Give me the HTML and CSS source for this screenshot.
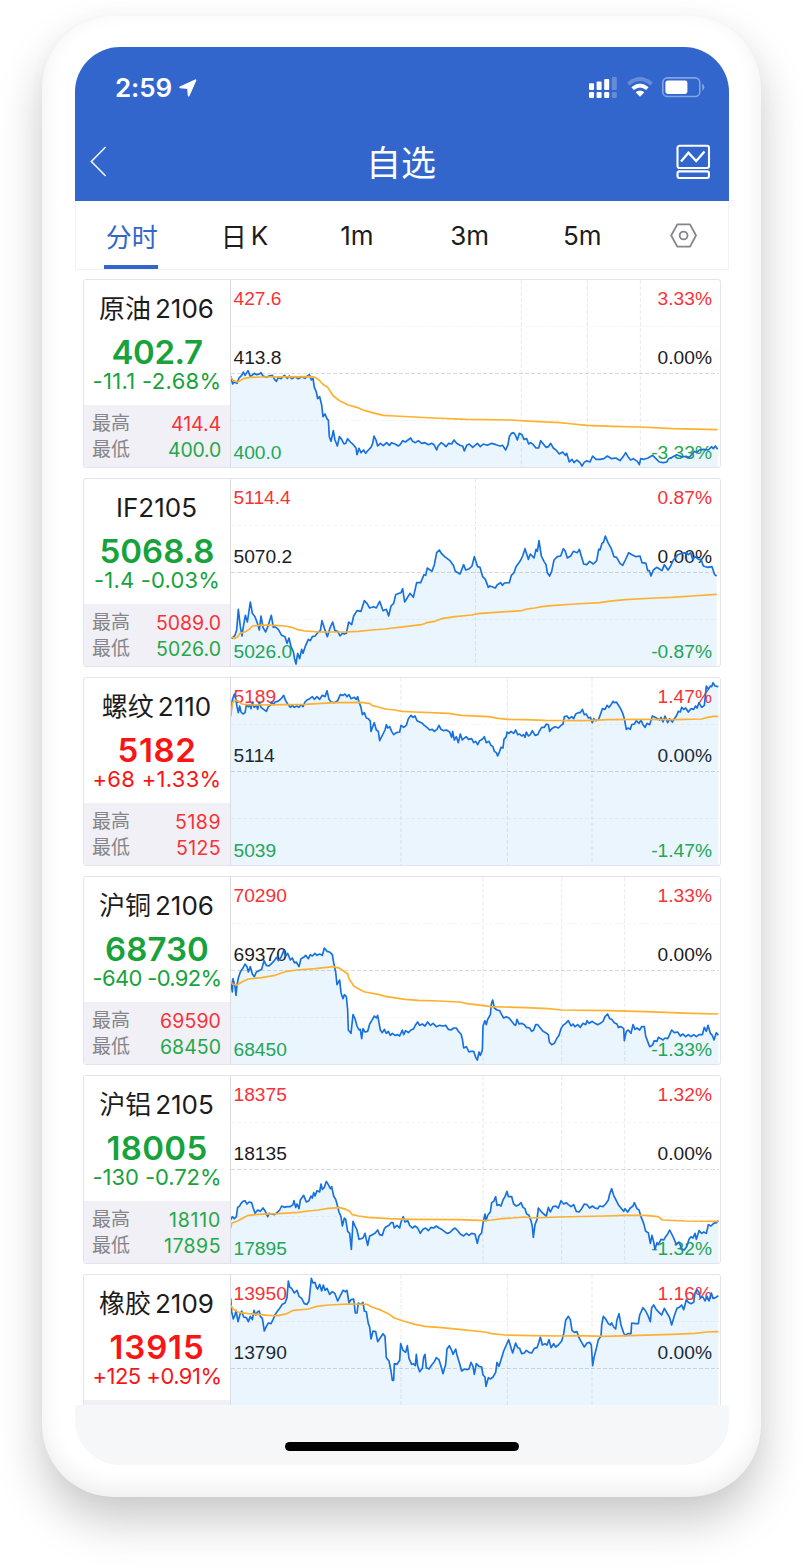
FILE: index.html
```html
<!DOCTYPE html>
<html lang="zh-CN">
<head>
<meta charset="utf-8">
<title>自选</title>
<link rel="stylesheet" href="styles.css">
</head>
<body>
<div class="phone">
  <div class="screen">
    <header class="header">
      <div class="status">
        <span class="time">2:59</span>
        <svg class="locate" viewBox="0 0 18 18"><path d="M1.2 8.3 16.5 1.2 9.7 16.6 9 9Z" fill="#fff" stroke="#fff" stroke-width="1.8" stroke-linejoin="round"/></svg>
        <svg class="signals" viewBox="0 0 118 22">
          <g fill="#fff">
            <rect x="0" y="6.3" width="5" height="6.7" rx="1"/><rect x="7.6" y="4.6" width="5" height="8.4" rx="1"/><rect x="15.2" y="2" width="5" height="11" rx="1"/>
            <rect x="0" y="15" width="5" height="6" rx="1.2"/><rect x="7.6" y="15" width="5" height="6" rx="1.2"/><rect x="15.2" y="15" width="5" height="6" rx="1.2"/>
            <g opacity=".25"><rect x="22.8" y="0" width="5" height="13" rx="1"/><rect x="22.8" y="15" width="5" height="6" rx="1.2"/></g>
            <path d="M46.6 15.2Q51 12 55.4 15.2L51 19.8Z"/>
          </g>
          <path d="M43.6 11.6Q51 5.3 58.4 11.6" fill="none" stroke="#fff" stroke-width="3.8"/>
          <path d="M39.4 7Q51-3 62.6 7" fill="none" stroke="#fff" stroke-opacity=".25" stroke-width="3.8"/>
          <rect x="73.8" y=".9" width="37" height="18.6" rx="4.6" fill="none" stroke="#fff" stroke-opacity=".4" stroke-width="1.6"/>
          <rect x="76.4" y="3.5" width="22" height="13.4" rx="2.4" fill="#fff"/>
          <path d="M113.2 6.6q2.2 1.1 2.2 3.6t-2.2 3.6z" fill="#fff" fill-opacity=".4"/>
        </svg>
      </div>
      <div class="navbar">
        <svg class="back" viewBox="0 0 17 31"><path d="M15.6 1 1.4 15.5 15.6 30" fill="none" stroke="#fff" stroke-opacity=".9" stroke-width="1.7"/></svg>
        <h1 class="title">自选</h1>
        <svg class="board" viewBox="0 0 35 36"><g fill="none" stroke="#fff" stroke-width="2.1"><rect x="1.5" y="1.8" width="31.5" height="22.2" rx="2"/><rect x="1.5" y="27.4" width="31.5" height="6.6" rx="2"/><path d="M5 17.5 12.4 8.8 20.2 17 28.5 7.6" stroke-width="2.3"/></g></svg>
      </div>
    </header>
    <nav class="tabs">
      <span class="tab active">分时</span>
      <span class="tab">日<span class="gap"></span>K</span>
      <span class="tab">1m</span>
      <span class="tab">3m</span>
      <span class="tab">5m</span>
      <svg class="gear" viewBox="0 0 27 25"><g fill="none" stroke="#85858a" stroke-width="1.8"><path d="M7.3 1.4H20L26 12.5 20 23.6H7.3L1.2 12.5Z" stroke-linejoin="round"/><circle cx="13.6" cy="12.5" r="3.9"/></g></svg>
    </nav>
    <main class="list" id="list"></main>
    <footer class="bottom"><div class="home"></div></footer>
  </div>
</div>
<script src="app.js"></script>
</body>
</html>
```
FILE: styles.css
```css
* { box-sizing: border-box; }
body {
  margin: 0;
  width: 804px;
  height: 1568px;
  overflow: hidden;
  background: #fff;
  font-family: Inter, "Noto Sans CJK SC", sans-serif;
  color: #1c1c1e;
}
.phone {
  width: 719px;
  height: 1481px;
  margin: 16px 0 0 42px;
  padding: 31px 32px 32px 33px;
  border-radius: 72px;
  background: #fff;
  box-shadow: 0 24px 46px rgba(0, 0, 0, .21), 0 0 22px rgba(0, 0, 0, .02), inset 0 -8px 22px rgba(0, 0, 0, .07);
}
.screen {
  width: 654px;
  height: 1418px;
  display: flex;
  flex-direction: column;
  border-radius: 45px;
  overflow: hidden;
  background: #fff;
}
.header { height: 154px; background: #3266cd; color: #fff; flex: none; }
.status { height: 81px; padding: 0 24px 0 40px; display: flex; align-items: center; }
.time { font-size: 26px; font-weight: 600; line-height: 30px; width: 57px; white-space: nowrap; letter-spacing: -.1px; }
.locate { width: 18px; height: 18px; margin-left: 7px; flex: none; }
.signals { width: 118px; height: 22px; margin-left: auto; margin-right: -2px; }
.navbar { height: 73px; padding: 0 18px 4px 15px; display: flex; align-items: center; justify-content: space-between; }
.back { width: 17px; height: 31px; margin-top: -2px; }
.title { margin: 0 0 0 19px; font-size: 35px; line-height: 40px; font-weight: 400; }
.board { width: 35px; height: 36px; margin-top: -1px; }
.tabs {
  height: 69px;
  flex: none;
  display: flex;
  align-items: stretch;
  border: 1px solid #f2f2f5;
  border-top: 0;
  font-size: 26px;
}
.tab { width: 112.6px; padding: 1px 1px 0 0; display: flex; justify-content: center; align-items: center; position: relative; }
.tab .gap { width: 4px; }
.active { color: #3266cd; padding-top: 0; }
.active::after { content: ""; position: absolute; left: 28px; bottom: 0; width: 54px; height: 4px; background: #3266cd; }
.gear { width: 27px; height: 25px; margin: 22px auto 0; }
.list {
  height: 1135px;
  flex: none;
  padding: 9px 8px 0;
  overflow: hidden;
  display: flex;
  flex-direction: column;
  gap: 10px;
}
.card {
  height: 189px;
  flex: none;
  display: flex;
  border: 1px solid #e3e4e9;
  border-radius: 3px;
  overflow: hidden;
}
.quote { width: 147px; flex: none; border-right: 1px solid #dcdde2; display: flex; flex-direction: column; text-align: center; white-space: nowrap; }
.name { height: 36px; margin-top: 11px; padding-right: 1px; line-height: 36px; font-size: 26px; display: flex; justify-content: center; gap: 4px; }
.price { height: 36px; margin-top: 7px; line-height: 36px; font-size: 33px; font-weight: 600; }
.change { height: 24px; margin-top: -1px; line-height: 24px; font-size: 22px; }
.range { height: 62px; margin-top: auto; padding: 6px 9px 0 8px; background: #f0f0f6; }
.row { height: 26px; display: flex; justify-content: space-between; align-items: center; font-size: 19px; line-height: 26px; color: #85858a; }
.row b { font-weight: 400; font-size: 19.5px; }
.up { color: #fa1414; }
.down { color: #17a23c; }
.row .up, .scale .up { color: #f83236; }
.row .down, .scale .down { color: #25a848; }
.chart { width: 488px; flex: none; height: 187px; position: relative; overflow: hidden; }
.scale {
  height: 187px;
  padding: 8px 7px 0 2.5px;
  font-family: "Liberation Sans", Arial, sans-serif;
  font-size: 19.2px;
  line-height: 22px;
}
.scale div { display: flex; justify-content: space-between; }
.scale div + div { margin-top: 37px; }
.scale div + div + div { margin-top: 73px; }
.plot { position: absolute; left: 0; top: 0; width: 489px; height: 187px; display: block; }
.grid { stroke: #000; stroke-opacity: .085; stroke-width: 3; stroke-dasharray: 12 6; fill: none; }
.grid .faint { stroke-opacity: .045; }
.grid .mid { stroke-opacity: .15; }
.area { fill: #1e96f0; fill-opacity: .095; }
.line { fill: none; stroke: #1670de; stroke-width: 5; stroke-linejoin: round; }
.avg { fill: none; stroke: #ffb02e; stroke-width: 5; stroke-linejoin: round; }
.bottom { flex: 1; background: #f6f7f9; display: flex; justify-content: center; padding-top: 37px; }
.home { width: 234px; height: 9px; border-radius: 5px; background: #000; }
```
FILE: app.js
```js
// Each plot uses three units per pixel; y0 is the top edge of its viewBox.
// Quote figures are [text, width in px]; spacing is adjusted to fill the width.
const quotes = [
  { name: ['原油', '2106'], dir: 'down', price: ['402.7', 91], change: ['-11.1 -2.68%', 129], hi: ['up', '414.4', 50], lo: ['down', '400.0', 53],
    scale: [['427.6', '3.33%'], ['413.8', '0.00%'], ['400.0', '-3.33%']], y0: 30, v: [889, 1087, 1246],
    line: '17,318 23,342 27,336 36,340 42,324 50,316 55,306 60,316 69,302 76,320 88,310 95,314 103,312 108,308 114,318 125,322 132,318 142,316 150,330 154,334 160,322 168,326 178,316 187,325 193,318 200,326 210,320 220,326 230,320 240,325 247,318 253,314 259,330 264,325 268,352 274,366 278,386 284,380 290,405 294,440 300,432 307,448 310,450 313,500 318,514 325,482 330,510 337,528 343,500 350,508 357,522 362,520 368,506 376,516 385,524 393,534 396,554 402,535 408,548 416,540 422,550 430,540 438,532 443,520 447,498 453,510 458,528 466,520 475,527 485,518 493,526 500,518 510,522 520,528 525,524 533,512 541,516 549,510 557,504 563,514 571,518 580,512 590,520 600,518 610,524 620,520 627,524 635,540 639,528 649,518 657,524 663,530 671,520 680,522 687,510 695,520 705,526 713,528 718,543 725,526 733,522 743,532 757,520 766,530 775,522 787,526 800,520 813,524 825,528 833,526 842,540 849,524 853,500 859,490 866,488 871,495 877,510 883,490 891,494 897,508 905,506 911,522 917,518 925,524 933,534 941,534 947,512 955,522 963,532 970,530 977,520 985,534 995,542 1003,552 1013,546 1021,556 1025,550 1033,576 1041,568 1047,578 1055,570 1065,578 1071,588 1077,578 1085,572 1095,576 1103,558 1113,568 1125,568 1137,566 1147,558 1160,566 1173,564 1185,572 1193,562 1202,548 1209,560 1217,570 1225,566 1237,574 1243,584 1247,566 1257,568 1269,564 1283,556 1293,566 1303,576 1315,578 1325,576 1331,566 1341,562 1355,554 1370,560 1385,560 1393,562 1401,552 1409,544 1415,548 1423,540 1435,538 1450,540 1460,530 1465,536 1471,528 1478,538',
    avg: '17,320 25,332 38,336 55,326 75,322 110,321 260,320 270,322 282,330 295,344 308,352 325,378 345,393 370,405 395,412 420,422 450,430 475,436 510,438 625,444 725,448 855,450 925,454 1005,458 1045,462 1085,466 1165,469 1245,471 1345,476 1478,479' },
  { name: ['IF2105'], dir: 'down', price: ['5068.8', 115], change: ['-1.4 -0.03%', 126], hi: ['up', '5089.0', 65], lo: ['down', '5026.0', 65],
    scale: [['5114.4', '0.87%'], ['5070.2', '0.00%'], ['5026.0', '-0.87%']], y0: 27, v: [751.5],
    line: '20,506 30,496 35,480 40,418 46,470 51,498 55,470 61,436 67,456 76,396 82,430 90,440 98,462 103,480 108,438 114,472 122,486 129,468 139,436 145,472 150,470 160,478 170,496 180,500 186,520 192,504 198,530 205,545 209,568 213,582 218,550 224,566 230,538 234,550 242,526 250,508 256,512 262,500 270,498 280,486 286,482 291,452 298,474 307,500 315,474 323,456 330,482 338,484 345,498 352,490 358,492 364,490 371,456 380,464 386,438 396,422 408,424 418,392 426,400 434,414 446,410 454,414 464,394 474,422 484,418 491,438 498,408 506,400 512,374 522,370 528,368 533,356 539,396 555,370 565,382 575,338 587,338 597,314 602,316 607,294 621,304 628,284 635,248 643,240 649,250 659,260 675,272 685,286 691,304 705,312 716,284 722,300 733,296 741,288 748,260 758,290 765,292 773,320 781,328 790,352 795,348 811,354 817,344 827,338 832,346 838,339 853,338 859,316 867,308 873,290 885,274 893,258 900,236 910,268 916,252 927,264 933,238 937,244 942,212 949,258 957,274 963,284 967,308 974,318 980,304 987,270 997,260 1007,258 1015,236 1021,244 1027,264 1037,258 1045,244 1057,248 1063,238 1070,262 1076,282 1085,284 1094,274 1105,282 1115,272 1121,238 1125,240 1131,220 1136,216 1141,198 1149,218 1159,236 1167,260 1175,262 1185,280 1193,286 1201,270 1211,248 1221,254 1233,260 1245,258 1251,278 1263,280 1268,302 1273,302 1278,318 1285,300 1295,292 1305,298 1311,302 1318,284 1329,300 1337,288 1345,270 1359,254 1370,250 1383,248 1390,254 1397,248 1403,268 1410,260 1421,268 1428,268 1435,288 1447,292 1461,290 1469,314 1475,318',
    avg: '20,500 28,506 38,500 45,490 60,486 72,478 82,468 100,466 115,465 150,466 180,468 200,472 215,478 240,483 280,486 360,486 400,484 440,480 480,477 540,470 590,464 605,458 630,454 650,446 690,440 740,435 760,431 800,428 860,424 890,422 905,417 930,414 950,410 980,407 1050,402 1125,398 1150,394 1200,389 1290,384 1340,382 1400,378 1475,373' },
  { name: ['螺纹', '2110'], dir: 'up', price: ['5182', 79], change: ['+68 +1.33%', 129], hi: ['up', '5189', 46], lo: ['up', '5125', 45],
    scale: [['5189', '1.47%'], ['5114', '0.00%'], ['5039', '-1.47%']], y0: 24, v: [528, 847, 1101],
    line: '17,135 22,90 28,72 33,88 36,110 40,128 44,108 48,126 54,132 60,128 64,106 70,110 74,104 78,116 82,98 88,112 94,106 98,118 103,96 108,112 116,118 124,124 130,110 136,106 140,96 146,104 150,96 158,94 164,90 170,84 176,76 182,92 188,102 196,112 202,106 208,112 216,108 222,112 228,104 234,110 240,96 246,90 254,86 262,80 268,88 276,80 284,88 292,76 300,80 306,62 312,88 318,96 328,98 338,92 346,74 354,76 360,72 366,80 372,74 378,86 388,82 394,88 398,80 402,96 408,112 412,134 418,128 424,144 430,146 436,154 438,184 444,168 448,158 454,180 460,184 464,212 470,200 474,192 480,180 484,164 488,174 494,170 500,184 506,194 514,188 524,186 528,166 536,172 544,166 550,146 558,136 564,142 570,138 576,152 584,156 592,160 598,166 606,172 614,180 622,178 628,184 636,178 642,166 648,178 656,182 664,180 674,186 680,202 683,184 688,210 694,200 700,218 706,192 712,210 718,204 724,200 730,208 740,206 746,218 752,214 758,224 764,212 772,208 778,200 784,218 792,214 798,226 804,230 808,244 814,248 818,258 824,244 828,232 834,234 837,208 844,200 846,186 852,190 858,184 866,190 872,180 878,194 884,192 890,198 896,194 900,202 904,186 910,198 916,194 922,182 930,196 938,194 944,182 950,172 958,172 964,162 970,164 974,184 980,176 990,170 1000,174 1008,166 1014,162 1018,140 1026,138 1032,146 1040,140 1046,146 1052,132 1060,128 1066,128 1072,118 1078,134 1084,132 1090,144 1096,142 1102,158 1106,146 1112,152 1120,150 1126,134 1132,116 1140,118 1146,106 1152,112 1158,104 1164,94 1168,98 1174,96 1182,108 1188,118 1194,132 1198,146 1204,178 1210,174 1216,178 1220,164 1228,162 1234,152 1242,160 1248,150 1254,164 1260,172 1266,160 1274,164 1282,138 1290,142 1298,146 1304,150 1308,142 1314,156 1320,138 1328,158 1334,146 1342,156 1348,146 1354,138 1360,124 1366,126 1370,112 1376,118 1382,114 1390,126 1398,116 1406,118 1412,108 1416,114 1422,98 1430,112 1438,106 1444,48 1450,58 1456,48 1460,50 1464,38 1470,48 1480,50',
    avg: '17,140 22,100 28,91 38,92 50,102 80,105 180,104 240,103 290,100 330,98 410,97 435,101 442,107 460,111 480,117 510,120 530,124 570,126 670,130 710,136 790,140 820,145 850,148 900,149 960,151 1080,152 1150,149 1250,148 1350,149 1430,147 1448,142 1465,139 1480,139' },
  { name: ['沪铜', '2106'], dir: 'down', price: ['68730', 104], change: ['-640 -0.92%', 129], hi: ['up', '69590', 61], lo: ['down', '68450', 61],
    scale: [['70290', '1.33%'], ['69370', '0.00%'], ['68450', '-1.33%']], y0: 21, v: [774, 1010, 1199],
    line: '17,332 22,366 24,326 30,350 33,376 36,345 40,324 46,306 54,294 60,282 66,290 70,306 76,290 82,312 88,320 94,306 102,302 110,298 117,272 124,286 132,288 140,280 148,272 154,262 160,272 168,262 176,242 182,258 188,250 196,270 202,264 208,278 214,276 222,290 228,266 236,262 242,256 250,266 256,254 262,258 270,250 276,256 284,252 292,256 298,234 306,244 314,246 322,254 326,278 332,306 336,344 344,330 348,368 354,386 358,374 364,380 368,420 370,480 378,490 384,434 390,446 396,468 402,480 406,478 410,506 414,476 420,486 428,484 434,462 440,452 448,438 454,444 458,436 462,458 466,480 472,488 478,478 484,490 490,484 496,496 502,490 510,496 518,494 524,498 532,480 536,494 542,482 550,488 558,480 566,476 572,464 578,456 584,466 592,462 600,468 608,456 616,466 624,460 634,470 644,466 654,468 662,466 670,478 678,480 686,474 694,474 700,484 708,492 712,506 716,534 724,530 732,546 738,544 746,544 752,562 757,570 762,546 766,556 772,540 774,468 780,452 784,464 788,448 796,434 799,402 803,390 808,414 816,420 824,422 830,434 836,444 844,440 852,444 860,454 868,464 872,466 876,448 882,462 890,460 898,464 904,472 914,474 920,484 926,480 932,464 938,464 946,474 954,484 962,488 970,494 973,516 980,524 988,520 996,504 1002,496 1008,476 1014,466 1022,460 1030,452 1038,468 1044,462 1050,470 1058,464 1066,472 1074,460 1082,464 1086,452 1092,460 1102,454 1110,460 1118,464 1126,460 1134,454 1140,440 1148,432 1154,446 1160,448 1168,458 1176,462 1180,472 1188,470 1196,476 1198,512 1204,484 1210,480 1218,490 1224,464 1230,478 1236,474 1244,480 1250,470 1258,470 1262,498 1268,514 1274,530 1282,526 1288,512 1296,514 1300,502 1308,506 1314,510 1320,504 1328,506 1334,494 1340,480 1348,488 1358,486 1366,498 1374,492 1382,500 1390,494 1398,500 1406,494 1414,500 1422,494 1432,494 1438,472 1444,484 1449,466 1456,490 1462,496 1467,510 1474,488 1480,496',
    avg: '18,334 22,342 36,345 50,336 70,327 110,323 150,316 180,305 215,300 270,296 325,290 345,295 360,306 368,312 372,326 380,338 386,348 400,356 420,366 460,373 480,379 540,388 580,391 640,393 705,396 725,401 770,406 800,410 900,413 970,416 1010,420 1150,422 1260,425 1400,430 1480,432' },
  { name: ['沪铝', '2105'], dir: 'down', price: ['18005', 101], change: ['-130 -0.72%', 129], hi: ['down', '18110', 52], lo: ['down', '17895', 57],
    scale: [['18375', '1.32%'], ['18135', '0.00%'], ['17895', '-1.32%']], y0: 18, v: [774, 1010, 1199],
    line: '17,450 22,440 28,446 34,440 38,412 44,408 48,400 54,394 60,392 66,402 72,396 80,398 84,412 90,430 98,420 106,424 114,414 120,422 128,440 132,430 140,432 148,434 156,428 164,420 170,408 178,412 186,410 196,410 204,404 207,392 212,412 216,402 222,416 226,390 236,376 244,396 252,392 258,378 262,384 266,368 270,378 276,362 284,366 288,342 292,358 298,352 304,334 310,344 316,356 320,350 326,378 332,388 336,402 342,426 348,440 352,468 358,444 362,448 368,484 374,490 379,538 384,454 390,468 396,480 402,508 408,506 414,504 420,490 424,508 428,526 434,498 442,494 450,490 458,480 464,494 472,496 478,476 484,470 492,466 498,458 504,458 508,474 516,466 524,474 528,456 535,440 540,456 548,452 554,466 562,474 570,468 578,474 586,490 594,478 602,474 610,482 618,472 626,474 634,468 642,474 650,478 658,484 666,490 674,488 682,480 690,474 698,482 706,492 716,498 724,490 732,496 740,490 750,492 757,520 762,498 770,488 774,460 780,432 783,452 788,436 796,426 800,398 806,394 812,380 816,406 822,404 828,408 834,390 840,380 846,364 850,380 860,380 866,402 874,408 882,404 888,398 894,412 900,416 905,432 912,436 918,452 922,470 925,502 930,464 936,448 940,414 948,424 956,432 964,438 970,412 976,426 984,410 992,408 1000,414 1008,392 1016,402 1024,398 1030,404 1038,410 1046,404 1054,424 1062,426 1070,416 1078,402 1086,404 1094,414 1102,408 1110,414 1118,416 1124,408 1134,410 1142,402 1150,390 1154,372 1160,356 1166,376 1174,392 1180,404 1188,414 1196,424 1200,416 1208,426 1216,414 1224,408 1228,398 1236,416 1242,420 1248,440 1256,460 1262,484 1270,488 1276,520 1281,496 1286,516 1290,538 1296,518 1300,524 1308,508 1316,510 1322,500 1328,492 1334,480 1340,492 1346,504 1354,524 1362,516 1370,536 1378,540 1386,528 1392,508 1398,500 1404,504 1410,490 1414,508 1422,482 1430,490 1436,486 1444,490 1450,464 1458,468 1466,460 1474,458 1480,452',
    avg: '17,475 20,460 36,454 50,446 70,436 100,433 160,431 220,427 250,423 280,420 310,415 345,413 362,418 374,424 382,434 400,438 430,442 490,446 560,448 700,449 780,452 800,450 830,446 900,441 920,444 1000,441 1140,438 1200,436 1260,436 1300,440 1312,450 1380,453 1480,454' },
  { name: ['橡胶', '2109'], dir: 'up', price: ['13915', 95], change: ['+125 +0.91%', 129], hi: null, lo: null,
    scale: [['13950', '1.16%'], ['13790', '0.00%']], y0: 30, v: [528, 847, 1101],
    line: '17,100 20,140 25,162 30,150 33,136 39,170 45,148 50,138 56,156 64,158 70,170 76,154 82,164 87,136 92,150 98,140 103,138 106,154 112,160 118,198 124,184 130,174 138,176 144,164 150,150 156,140 164,130 172,118 180,114 186,98 190,48 194,66 200,70 208,84 216,76 222,94 230,100 238,116 246,118 252,108 256,70 259,40 264,54 270,52 274,66 278,72 284,58 290,78 295,60 300,76 306,70 314,88 322,80 330,86 338,108 346,92 354,76 362,80 366,76 372,114 378,104 386,102 391,144 396,144 400,114 408,118 414,112 418,138 424,140 430,176 434,186 438,222 444,198 452,200 458,230 466,218 474,206 480,214 484,278 492,288 498,318 502,346 506,346 508,296 516,298 524,286 527,236 534,256 542,262 547,242 552,280 560,298 566,296 571,302 574,268 578,302 584,320 592,310 596,276 600,268 604,308 612,312 620,300 628,290 634,278 642,284 648,304 654,326 662,298 666,252 673,242 680,256 684,268 692,252 696,270 704,296 710,318 718,312 726,314 732,312 738,292 744,304 748,328 754,296 762,304 770,306 774,330 780,336 783,364 790,338 796,342 804,336 812,322 816,292 822,304 830,278 836,258 844,240 851,224 858,248 863,264 872,234 878,248 884,250 890,266 898,264 904,256 912,262 920,264 928,250 936,248 942,230 946,216 952,240 960,236 966,240 972,224 978,248 986,236 992,246 1000,240 1010,228 1016,206 1022,166 1030,154 1036,164 1041,196 1048,202 1056,200 1062,218 1070,232 1078,246 1086,234 1094,232 1099,240 1103,302 1107,278 1114,250 1120,224 1128,214 1130,180 1135,154 1142,162 1150,176 1156,180 1160,174 1166,186 1172,192 1176,164 1182,146 1188,180 1196,204 1200,212 1208,206 1218,206 1220,174 1232,176 1240,176 1244,150 1254,128 1262,138 1270,154 1276,170 1280,128 1286,120 1294,134 1302,142 1310,150 1318,130 1326,144 1334,158 1340,180 1348,152 1356,130 1364,126 1370,120 1376,134 1384,104 1390,112 1398,116 1406,112 1410,84 1416,74 1422,82 1426,98 1434,96 1440,108 1446,94 1452,108 1459,84 1464,100 1472,98 1480,92',
    avg: '17,120 24,132 40,142 70,146 100,148 130,151 160,152 185,146 205,136 250,132 275,124 310,120 370,117 425,118 440,126 465,134 490,146 508,159 535,168 570,178 600,184 650,188 710,194 780,201 800,206 840,210 920,212 1010,213 1060,212 1140,214 1240,211 1340,208 1410,205 1445,201 1480,200' }
];

const tone = ['up', '', 'down'];

function rangeRow(label, value) {
  return value ? `<div class="row"><span>${label}</span><b class="${value[0]}" data-fit="${value[2]}">${value[1]}</b></div>` : '';
}

function plot(q) {
  const bottom = q.y0 + 561;
  const first = q.line.split(',')[0];
  const last = q.line.slice(q.line.lastIndexOf(' ') + 1).split(',')[0];
  const h = (dy, cls) => `<path class="${cls}" d="M18 ${q.y0 + dy}H1485"/>`;
  return `<svg class="plot" viewBox="18 ${q.y0} 1467 561">
    <g class="grid">${h(139.5, 'faint')}${h(280.5, 'mid')}${h(421.5, 'faint')}${q.v.map(x => `<path d="M${x} ${q.y0}V${bottom}"/>`).join('')}</g>
    <polygon class="area" points="${first},${bottom} ${q.line} ${last},${bottom}"/>
    <polyline class="line" points="${q.line}"/>
    <polyline class="avg" points="${q.avg}"/>
  </svg>`;
}

document.getElementById('list').innerHTML = quotes.map(q => `
  <section class="card">
    <div class="quote">
      <div class="name">${q.name.map(n => `<span>${n}</span>`).join('')}</div>
      <div class="price ${q.dir}"><span data-fit="${q.price[1]}">${q.price[0]}</span></div>
      <div class="change ${q.dir}"><span data-fit="${q.change[1]}">${q.change[0]}</span></div>
      <div class="range">${rangeRow('最高', q.hi)}${rangeRow('最低', q.lo)}</div>
    </div>
    <div class="chart">
      <div class="scale">${q.scale.map((r, i) => `<div class="${tone[i]}"><span>${r[0]}</span><span>${r[1]}</span></div>`).join('')}</div>
      ${plot(q)}
    </div>
  </section>`).join('');

document.querySelectorAll('[data-fit]').forEach(el => {
  const spacing = (el.dataset.fit - el.getBoundingClientRect().width) / el.textContent.length;
  el.style.letterSpacing = spacing.toFixed(2) + 'px';
});
```
